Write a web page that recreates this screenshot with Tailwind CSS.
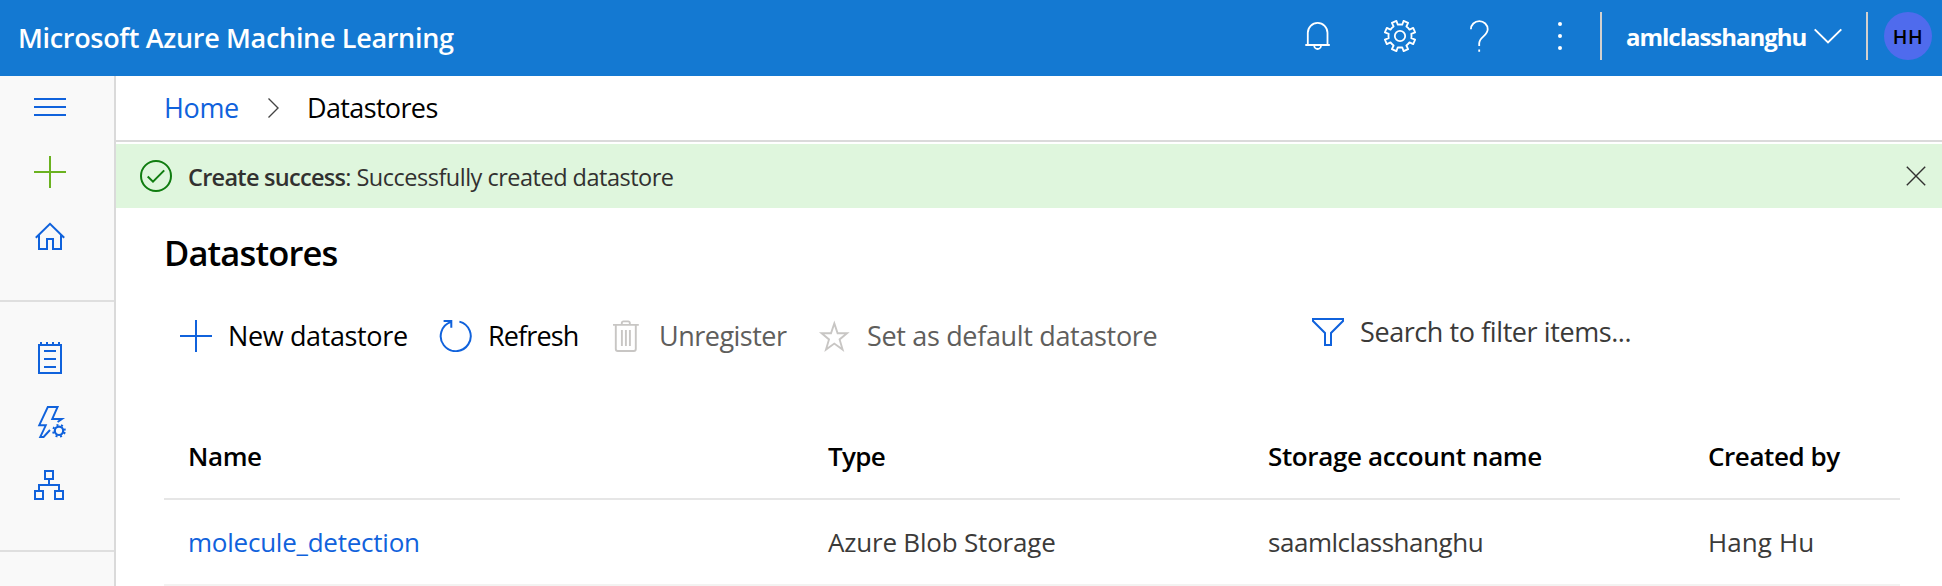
<!DOCTYPE html>
<html lang="en">
<head>
<meta charset="utf-8">
<title>Datastores - Microsoft Azure Machine Learning</title>
<script src="https://cdn.jsdelivr.net/npm/@tailwindcss/browser@4"></script>
</head>
<body class="flex h-[586px] w-[1942px] flex-col overflow-hidden bg-white font-['Open_Sans',sans-serif] text-[27px] leading-9 whitespace-nowrap text-black">

<header class="flex h-[76px] shrink-0 items-start justify-between bg-[#1479d2] pr-[10px] pl-[18px] text-white">
  <div class="flex h-[76px] items-center font-semibold tracking-[-0.32px]">Microsoft Azure Machine Learning</div>
  <div class="flex h-[72px] items-center">
    <svg class="mr-[51px] size-8" viewBox="0 0 32 32" fill="none" stroke="currentColor" stroke-width="1.8"><path d="M6.8 25V12.8a9.8 9.8 0 0 1 19.7 0V25M4.3 25h24.5M13.2 25.5a3.4 3.5 0 0 0 6.8 0"/></svg>
    <svg class="mr-[47px] size-8" viewBox="-16 -16 32 32" fill="none" stroke="currentColor" stroke-width="1.8" stroke-linejoin="round"><path d="M2.2-11.3 3.6-15.1 8.1-13.2 6.4-9.5Q8.2-8.2 9.5-6.4L13.2-8.1 15.1-3.6 11.3-2.2Q11.7 0 11.3 2.2L15.1 3.6 13.2 8.1 9.5 6.4Q8.2 8.2 6.4 9.5L8.1 13.2 3.6 15.1 2.2 11.3Q0 11.7-2.2 11.3L-3.6 15.1-8.1 13.2-6.4 9.5Q-8.2 8.2-9.5 6.4L-13.2 8.1-15.1 3.6-11.3 2.2Q-11.7 0-11.3-2.2L-15.1-3.6-13.2-8.1-9.5-6.4Q-8.2-8.2-6.4-9.5L-8.1-13.2-3.6-15.1-2.2-11.3Q0-11.7 2.2-11.3Z"/><circle r="5.2"/></svg>
    <svg class="mr-[49px] size-8" viewBox="0 0 32 32" fill="none" stroke="currentColor" stroke-width="1.8"><path d="M7.9 9.3a8.4 8.2 0 0 1 16.8 0c0 6.6-8.5 7.6-8.5 14.2V26M16.2 29.6v2.2"/></svg>
    <svg class="mr-6 size-8" viewBox="0 0 32 32" fill="currentColor"><circle cx="16" cy="4" r="2"/><circle cx="16" cy="16" r="2"/><circle cx="16" cy="28" r="2"/></svg>
    <div class="mr-6 h-12 w-[2px] bg-[#d2d0ce]"></div>
    <div class="w-[187px] pt-[2px] text-[24px] font-bold tracking-[-1.02px]">amlclasshanghu</div>
    <svg class="mr-6 h-4 w-[29px]" viewBox="0 0 29 16" fill="none" stroke="currentColor" stroke-width="2"><path d="M1.7 2 15 15 28.3 2" transform="translate(0 -.6)"/></svg>
    <div class="mr-4 h-12 w-[2px] bg-[#d2d0ce]"></div>
    <div class="flex size-12 items-center justify-center rounded-full bg-[#4f6bed] pt-px text-[19.5px] font-semibold text-black"><span class="tracking-[0.5px]">HH</span></div>
  </div>
</header>

<div class="flex min-h-0 grow">
  <nav class="flex w-[116px] shrink-0 flex-col border-r-2 border-[#dadada] bg-[#f9f9f9] text-[#1062dc]">
    <div class="flex h-[226px] flex-col border-b-2 border-[#dfdfdf] pl-[34px]">
      <div class="flex h-16 items-center"><svg class="size-8" viewBox="0 0 32 32" fill="none" stroke="currentColor" stroke-width="2"><path d="M0 7h32M0 15h32M0 23h32"/></svg></div>
      <div class="flex h-16 items-center text-[#6bb220]"><svg class="size-8" viewBox="0 0 32 32" fill="none" stroke="currentColor" stroke-width="2"><path d="M0 16h32M16 0v32"/></svg></div>
      <div class="flex h-16 items-center"><svg class="size-8" viewBox="0 0 32 32" fill="none" stroke="currentColor" stroke-width="2"><path d="M1.8 17.8 16 3.8 30.2 17.8M5 15v14h8V19h6v10h8V15"/></svg></div>
    </div>
    <div class="flex h-[250px] flex-col border-b-2 border-[#dfdfdf] pt-6 pl-[34px]">
      <div class="flex h-16 items-center"><svg class="size-8" viewBox="0 0 32 32" fill="none" stroke="currentColor" stroke-width="2"><path d="M5 3h22v28H5ZM7 0v3M13 0v3M19 0v3M25 0v3M10 9h12M10 17h12M10 25h12"/></svg></div>
      <div class="flex h-16 items-center"><svg class="size-8 overflow-visible" viewBox="0 0 32 32" fill="none" stroke="currentColor" stroke-width="1.9"><path d="M23.6 16 28 13H18.2L23.6 1H13.8L5.2 19.3H11.8L6.2 31H9.6L16 24"/><circle cx="25" cy="24.8" r="4.2" stroke-width="2.2"/><circle cx="25" cy="24.8" r="5.9" stroke-dasharray="2 2.634" stroke-dashoffset="3.3"/></svg></div>
      <div class="flex h-16 items-center"><svg class="size-8" viewBox="0 0 32 32" fill="none" stroke="currentColor" stroke-width="2"><path d="M11 1h8v8h-8ZM1 21h8v8H1ZM21 21h8v8h-8ZM15 9v6M5 20v-5h20v5"/></svg></div>
    </div>
  </nav>

  <main class="flex min-w-0 grow flex-col">
    <div class="flex h-[66px] shrink-0 items-center border-b-2 border-[#dadada] pl-12">
      <a class="w-[103px] tracking-[-0.382px] text-[#1062dc]">Home</a>
      <svg class="mr-[27px] h-5 w-3" viewBox="0 0 12 20" fill="none" stroke="#444" stroke-width="1.4"><path d="M1.5.6 11 10 1.5 19.4"/></svg>
      <span class="ml-px tracking-[-0.64px]">Datastores</span>
    </div>

    <div class="mt-[2px] flex h-16 shrink-0 items-center justify-between bg-[#dff6dd] pr-4 pl-6 text-[23.5px] text-[#323130]">
      <div class="flex items-center">
        <svg class="mr-4 size-8" viewBox="0 0 32 32" fill="none" stroke="#107c10" stroke-width="2"><circle cx="16" cy="16" r="15"/><path d="M7.7 16.5 13 21.7 24.2 10.4"/></svg>
        <div class="pt-[2px] tracking-[-0.5px]"><span class="font-semibold tracking-[-0.72px]">Create success</span>: Successfully created datastore</div>
      </div>
      <svg class="size-5" viewBox="0 0 20 20" fill="none" stroke="currentColor" stroke-width="1.4"><path d="M.8.8 19.2 19.2M19.2.8.8 19.2"/></svg>
    </div>

    <h1 class="flex h-[88px] shrink-0 items-center pt-[2px] pl-12 text-[34.5px] font-semibold tracking-[-0.86px]">Datastores</h1>

    <div class="flex h-20 shrink-0 items-center pl-16">
      <svg class="mr-4 size-8 text-[#1062dc]" viewBox="0 0 32 32" fill="none" stroke="currentColor" stroke-width="2"><path d="M0 16h32M16 0v32"/></svg>
      <span class="w-[211px] tracking-[-0.37px]">New datastore</span>
      <svg class="mr-4 h-8 w-[33px] text-[#1062dc]" viewBox="0 0 33 32" fill="none" stroke="currentColor" stroke-width="2"><path d="M20.4 1.6A15 15 0 1 1 12 1.9M4.6 1H12.6M12.3 0V7.8"/></svg>
      <span class="w-[122px] tracking-[-0.88px]">Refresh</span>
      <svg class="mr-[17px] size-8 text-[#c8c6c4]" viewBox="0 0 32 32" fill="none" stroke="currentColor" stroke-width="1.9"><path d="M3 4.9h25.8M11.8 4.9V3a1.6 1.6 0 0 1 1.6-1.6h4.8A1.6 1.6 0 0 1 19.8 3v1.9M5.8 4.9V29a2 2 0 0 0 2 2h16a2 2 0 0 0 2-2V4.9M11.9 10v16M15.9 10v16M19.9 10v16"/></svg>
      <span class="w-[159px] tracking-[-0.507px] text-[#605e5c]">Unregister</span>
      <svg class="mr-[17px] size-8 text-[#c8c6c4]" viewBox="0 0 32 32" fill="none" stroke="currentColor" stroke-width="1.9"><path d="M16.3 3.4 19.6 13.3H29L21.6 19.4 24.6 29.6 16.3 23.6 8 29.6 11 19.4 3.6 13.3H13Z"/></svg>
      <span class="w-[445px] tracking-[-0.334px] text-[#605e5c]">Set as default datastore</span>
      <div class="flex items-center pb-2 text-[#3b3a39]">
        <svg class="mr-4 h-7 w-8" viewBox="0 0 32 28" fill="none" stroke="#1062dc" stroke-width="2"><path d="M1 1H31V3L19 15V27H13V15L1 3Z"/></svg>
        <span class="tracking-[-0.42px]">Search to filter items...</span>
      </div>
    </div>

    <div class="mt-[38px] mr-[42px] ml-12 shrink-0 text-[26px]">
      <div class="grid h-[86px] grid-cols-[640px_440px_440px_1fr] items-center border-b-2 border-[#e6e6e6] pl-6 font-semibold">
        <span class="tracking-[-0.4px]">Name</span>
        <span class="tracking-[-0.7px]">Type</span>
        <span class="tracking-[-0.36px]">Storage account name</span>
        <span class="tracking-[-0.42px]">Created by</span>
      </div>
      <div class="grid h-[86px] grid-cols-[640px_440px_440px_1fr] items-center border-b-2 border-[#f3f2f1] pl-6 text-[#3b3a39]">
        <a class="tracking-[-0.24px] text-[#1062dc]">molecule_detection</a>
        <span class="tracking-[-0.2px]">Azure Blob Storage</span>
        <span class="tracking-[-0.46px]">saamlclasshanghu</span>
        <span class="tracking-[0.1px]">Hang Hu</span>
      </div>
    </div>
  </main>
</div>
</body>
</html>
